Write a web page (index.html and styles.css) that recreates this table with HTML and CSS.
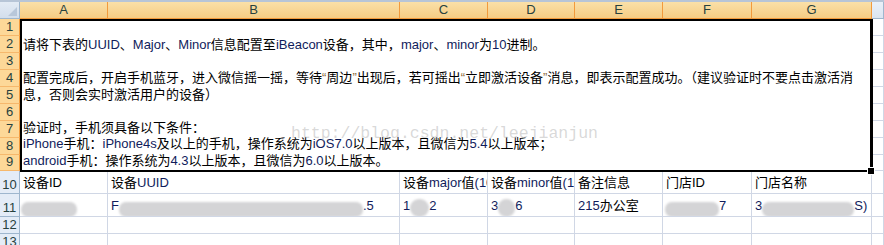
FILE: index.html
```html
<!DOCTYPE html>
<html>
<head>
<meta charset="utf-8">
<link rel="stylesheet" href="styles.css">
</head>
<body>
<div class="topline"></div>
<div class="sheet">
  <div class="merged">
    <div class="ln"></div>
    <div class="ln">请将下表的<span class="lat">UUID</span>、<span class="lat">Major</span>、<span class="lat">Minor</span>信息配置至<span class="lat">iBeacon</span>设备，其中，<span class="lat">major</span>、<span class="lat">minor</span>为<span class="lat">10</span>进制。</div>
    <div class="ln"></div>
    <div class="ln">配置完成后，开启手机蓝牙，进入微信摇一摇，等待<span class="q">“</span>周边<span class="q">”</span>出现后，若可摇出<span class="q">“</span>立即激活设备<span class="q">”</span>消息，即表示配置成功。（建议验证时不要点击激活消</div>
    <div class="ln">息，否则会实时激活用户的设备）</div>
    <div class="ln"></div>
    <div class="ln">验证时，手机须具备以下条件：</div>
    <div class="ln"><span class="lat">iPhone</span>手机：<span class="lat">iPhone4s</span>及以上的手机，操作系统为<span class="lat">iOS7.0</span>以上版本，且微信为<span class="lat">5.4</span>以上版本；</div>
    <div class="ln"><span class="lat">android</span>手机：操作系统为<span class="lat">4.3</span>以上版本，且微信为<span class="lat">6.0</span>以上版本。</div>
  </div>

  <div class="corner"></div>
  <div class="ch sel">A</div>
  <div class="ch sel">B</div>
  <div class="ch sel">C</div>
  <div class="ch sel">D</div>
  <div class="ch sel">E</div>
  <div class="ch sel">F</div>
  <div class="ch sel">G</div>
  <div class="ch"></div>

  <div class="rh sel">1</div><div class="c"></div>
  <div class="rh sel">2</div><div class="c"></div>
  <div class="rh sel">3</div><div class="c"></div>
  <div class="rh sel">4</div><div class="c"></div>
  <div class="rh sel">5</div><div class="c"></div>
  <div class="rh sel">6</div><div class="c"></div>
  <div class="rh sel">7</div><div class="c"></div>
  <div class="rh sel">8</div><div class="c"></div>
  <div class="rh sel">9</div><div class="c"></div>

  <div class="rh">10</div>
  <div class="c t">设备ID</div>
  <div class="c t">设备<span class="lat">UUID</span></div>
  <div class="c t">设备<span class="lat">major</span>值<span class="lat">(10)</span></div>
  <div class="c t">设备<span class="lat">minor</span>值<span class="lat">(10)</span></div>
  <div class="c t">备注信息</div>
  <div class="c t">门店ID</div>
  <div class="c t">门店名称</div>
  <div class="c"></div>

  <div class="rh">11</div>
  <div class="c t"><span class="blob b-a"></span></div>
  <div class="c t"><span class="lat">F</span><span class="blob b-b"></span><span class="lat">.5</span></div>
  <div class="c t"><span class="lat">1</span><span class="blob b-c"></span><span class="lat">2</span></div>
  <div class="c t"><span class="lat">3</span><span class="blob b-d"></span><span class="lat">6</span></div>
  <div class="c t"><span class="lat">215</span>办公室</div>
  <div class="c t"><span class="blob b-f"></span><span class="lat">7</span></div>
  <div class="c t"><span class="lat">3</span><span class="blob b-g"></span><span class="lat">S)</span></div>
  <div class="c"></div>

  <div class="rh">12</div>
  <div class="c"></div><div class="c"></div><div class="c"></div><div class="c"></div><div class="c"></div><div class="c"></div><div class="c"></div><div class="c"></div>
  <div class="rh">13</div>
  <div class="c"></div><div class="c"></div><div class="c"></div><div class="c"></div><div class="c"></div><div class="c"></div><div class="c"></div><div class="c"></div>
</div>
<div class="watermark">http://blog.csdn.net/leejianjun</div>
</body>
</html>
```

FILE: styles.css
```css
html, body {
  margin: 0;
  padding: 0;
  background: #ffffff;
  overflow: hidden;
}
body {
  position: relative;
  width: 884px;
  height: 245px;
  font-family: "Liberation Sans", "Noto Sans CJK SC", sans-serif;
  font-size: 13px;
  color: #000;
}
.topline {
  height: 2px;
  background: #b7c5d7;
}
.sheet {
  display: grid;
  grid-template-columns: 20px 88px 292px 88px 87px 88px 89px 120px 1fr;
  grid-template-rows: 17px 17px 17px 17px 17px 17px 17px 17px 17px 16px 23px 23px 17px 17px;
}
.sheet > div {
  box-sizing: border-box;
  overflow: hidden;
}
.corner {
  background: linear-gradient(#e3ebf5, #d3deec);
  border-right: 1px solid #9eb6ce;
  border-bottom: 1px solid #9eb6ce;
  position: relative;
}
.corner::after {
  content: "";
  position: absolute;
  right: 2px;
  bottom: 2px;
  width: 0;
  height: 0;
  border-left: 9px solid transparent;
  border-bottom: 9px solid #b8c7da;
}
.ch {
  background: linear-gradient(#eaf0f8, #dbe5f1);
  border-right: 1px solid #9eb6ce;
  border-bottom: 1px solid #9eb6ce;
  color: #27413e;
  text-align: center;
  line-height: 16px;
  font-size: 13px;
}
.ch.sel {
  background: linear-gradient(#fae0a8, #f5cc84);
  border-right: 1px solid #f29a3c;
  border-bottom: 1px solid #f29a3c;
}
.rh {
  grid-column: 1;
  background: #e4ecf7;
  border-right: 1px solid #9eb6ce;
  border-bottom: 1px solid #9eb6ce;
  color: #27413e;
  font-size: 13px;
  display: flex;
  align-items: flex-end;
  justify-content: center;
  padding-bottom: 1px;
  line-height: 15px;
}
.rh.sel {
  background: #fdd898;
  border-right: 1px solid #f29a3c;
  border-bottom: 1px solid #f6b86c;
}
.c {
  border-right: 1px solid #d0d7e5;
  border-bottom: 1px solid #d0d7e5;
  background: #fff;
}
.t {
  display: flex;
  align-items: flex-end;
  padding: 0 0 2px 3px;
  white-space: nowrap;
  line-height: 16px;
}
.merged {
  grid-column: 2 / 9;
  grid-row: 2 / 11;
  border: 2px solid #000;
  border-right-width: 3px;
  margin-right: -1px;
  margin-bottom: -1px;
  background: #fff;
  padding: 0 0 0 1px;
  position: relative;
  z-index: 2;
  overflow: visible !important;
}
.merged::after {
  content: "";
  position: absolute;
  right: -5px;
  bottom: -5px;
  width: 6px;
  height: 6px;
  background: #000;
  border: 1px solid #fff;
}
.ln {
  height: 16.45px;
  line-height: 16.45px;
  white-space: nowrap;
  overflow: hidden;
}
.lat {
  color: #101c5c;
}
.q {
  color: #8a6a3a;
}
.blob {
  display: inline-block;
  height: 15px;
  background: #d4d4d6;
  border-radius: 7px;
  filter: blur(1px);
  margin-bottom: -3px;
}
.b-a { width: 56px; margin-left: -2px; }
.b-b { width: 244px; margin-left: 0; }
.b-c { width: 19px; border-radius: 9px; height: 18px; }
.b-d { width: 17px; border-radius: 9px; height: 18px; }
.b-f { width: 54px; margin-left: -1px; }
.b-g { width: 92px; }
.watermark {
  position: absolute;
  left: 291px;
  top: 124px;
  font-family: "Liberation Mono", monospace;
  font-size: 16.5px;
  color: rgba(170, 170, 170, 0.45);
  z-index: 3;
  white-space: nowrap;
  pointer-events: none;
}
```
